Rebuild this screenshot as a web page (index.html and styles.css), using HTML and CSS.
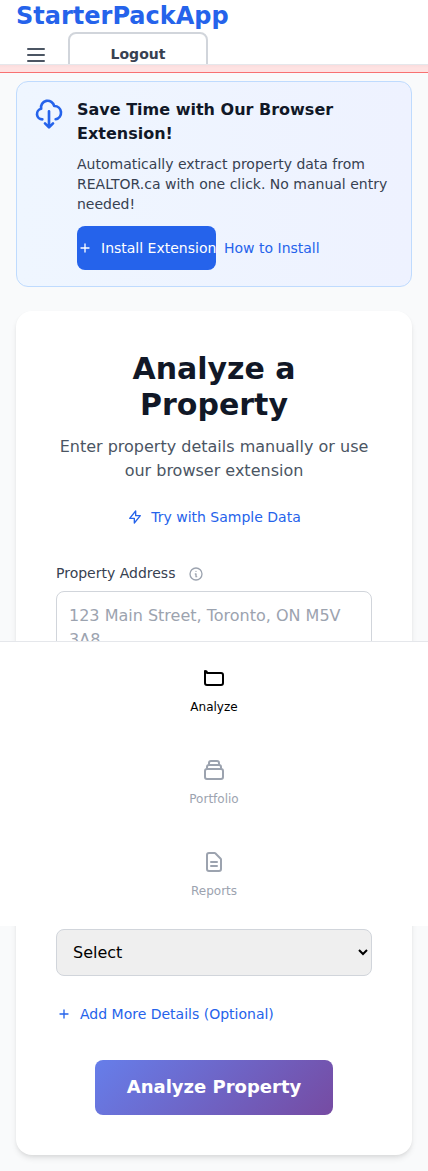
FILE: index.html
```html
<!DOCTYPE html>
<html lang="en">
<head>
<meta charset="utf-8">
<title>StarterPackApp</title>
<link rel="stylesheet" href="styles.css">
</head>
<body>
<header class="header">
  <div class="brand">StarterPackApp</div>
  <div class="header-row">
    <button class="menu-btn" aria-label="Menu"><svg class="icon icon-24" viewBox="0 0 24 24"><path d="M4 6h16M4 12h16M4 18h16"/></svg></button>
    <button class="logout">Logout</button>
  </div>
</header>
<div class="alert-strip"></div>
<main class="main">
  <section class="promo">
    <svg class="icon icon-32" viewBox="0 0 24 24"><path d="M7 16a4 4 0 01-.88-7.903A5 5 0 1115.9 6L16 6a5 5 0 011 9.9M9 19l3 3m0 0l3-3m-3 3V10"/></svg>
    <div class="promo-body">
      <h2 class="promo-title">Save Time with Our Browser Extension!</h2>
      <p class="promo-text">Automatically extract property data from REALTOR.ca with one click. No manual entry needed!</p>
      <div class="promo-actions">
        <button class="install"><svg class="icon icon-16" viewBox="0 0 24 24"><path d="M12 6v6m0 0v6m0-6h6m-6 0H6"/></svg><span>Install Extension</span></button>
        <a class="link">How to Install</a>
      </div>
    </div>
  </section>
  <section class="card">
    <h1 class="card-title">Analyze a Property</h1>
    <p class="card-sub">Enter property details manually or use our browser extension</p>
    <a class="link sample"><svg class="icon icon-16" viewBox="0 0 24 24"><path d="M13 10V3L4 14h7v7l9-11h-7z"/></svg><span>Try with Sample Data</span></a>
    <form class="form">
      <label class="label"><span>Property Address</span><svg class="icon icon-16 info" viewBox="0 0 24 24"><path d="M13 16h-1v-4h-1m1-4h.01M21 12a9 9 0 11-18 0 9 9 0 0118 0z"/></svg></label>
      <textarea class="address" placeholder="123 Main Street, Toronto, ON M5V 3A8"></textarea>
      <select class="select"><option>Select</option></select>
      <a class="link more"><svg class="icon icon-16" viewBox="0 0 24 24"><path d="M12 6v6m0 0v6m0-6h6m-6 0H6"/></svg><span>Add More Details (Optional)</span></a>
      <button type="button" class="submit">Analyze Property</button>
    </form>
  </section>
</main>
<nav class="tabs">
  <a class="tab tab-active"><svg class="icon icon-24" viewBox="0 0 24 24"><path d="M3 7v10a2 2 0 002 2h14a2 2 0 002-2V9a2 2 0 00-2-2H5a2 2 0 00-2-2z"/></svg><span>Analyze</span></a>
  <a class="tab"><svg class="icon icon-24" viewBox="0 0 24 24"><path d="M19 11H5m14 0a2 2 0 012 2v6a2 2 0 01-2 2H5a2 2 0 01-2-2v-6a2 2 0 012-2m14 0V9a2 2 0 00-2-2M5 11V9a2 2 0 012-2m0 0V5a2 2 0 012-2h6a2 2 0 012 2v2M7 7h10"/></svg><span>Portfolio</span></a>
  <a class="tab"><svg class="icon icon-24" viewBox="0 0 24 24"><path d="M9 12h6m-6 4h6m2 5H7a2 2 0 01-2-2V5a2 2 0 012-2h5.586a1 1 0 01.707.293l5.414 5.414a1 1 0 01.293.707V19a2 2 0 01-2 2z"/></svg><span>Reports</span></a>
</nav>
</body>
</html>
```

FILE: styles.css
```css
* { box-sizing: border-box; margin: 0; }
body {
  position: relative;
  height: 1171px;
  overflow: hidden;
  background: #f9fafb;
  color: #111827;
  font-family: "DejaVu Sans", sans-serif;
}
button, textarea, select { font-family: inherit; }
.icon { display: block; flex: none; fill: none; stroke: currentColor; stroke-width: 2; stroke-linecap: round; stroke-linejoin: round; }
.icon-16 { width: 16px; height: 16px; }
.icon-24 { width: 24px; height: 24px; }
.icon-32 { width: 32px; height: 32px; }

.header { height: 65px; overflow: hidden; padding: 0 16px; background: #fff; border-bottom: 1px solid #e5e7eb; }
.brand { height: 32px; font-size: 24px; line-height: 32px; font-weight: 700; color: #2563eb; }
.header-row { display: flex; align-items: flex-start; gap: 12px; }
.menu-btn { padding: 11px 8px; border: 0; background: none; color: #4b5563; }
.logout { width: 140px; height: 44px; border: 2px solid #d1d5db; border-radius: 8px; background: #fff; color: #374151; font-size: 14px; font-weight: 700; }

.alert-strip { height: 8px; background: linear-gradient(#f9dcdd, #fee2e2 3px); border-bottom: 1px solid #f87171; }

.main { padding: 8px 16px 0; }
.promo { display: flex; gap: 12px; padding: 16px; border: 1px solid #bfdbfe; border-radius: 12px; background: linear-gradient(to right, #eff6ff, #eef2ff); color: #2563eb; }
.promo-body { flex: 1; min-width: 0; }
.promo-title { font-size: 16px; line-height: 24px; font-weight: 700; color: #111827; }
.promo-text { margin-top: 8px; font-size: 14px; line-height: 20px; color: #374151; }
.promo-actions { display: flex; align-items: center; gap: 8px; margin-top: 12px; }
.install { display: flex; align-items: center; gap: 8px; width: 139px; height: 44px; padding: 0; border: 0; border-radius: 8px; background: #2563eb; color: #fff; font-size: 14px; white-space: nowrap; }
.link { font-size: 14px; line-height: 20px; color: #2563eb; }

.card { height: 844px; margin-top: 24px; padding: 40px; border-radius: 16px; background: #fff; box-shadow: 0 4px 6px -1px rgba(0,0,0,.1), 0 2px 4px -1px rgba(0,0,0,.06); }
.card-title { font-size: 30px; line-height: 36px; font-weight: 700; text-align: center; }
.card-sub { margin-top: 12px; font-size: 16px; line-height: 24px; color: #4b5563; text-align: center; }
.sample { display: flex; justify-content: center; align-items: center; gap: 8px; margin-top: 24px; }
.form { display: flex; flex-direction: column; margin-top: 36px; }
.label { display: flex; align-items: center; gap: 12px; height: 20px; font-size: 14px; line-height: 20px; color: #374151; }
.info { margin: 2px 0 0 1px; color: #9ca3af; }
.address { height: 74px; margin-top: 8px; padding: 12px; border: 1px solid #d1d5db; border-radius: 8px; font-size: 16px; line-height: 24px; resize: none; overflow: hidden; }
.address::placeholder { color: #9ca3af; }
.select { height: 47px; margin-top: 264px; padding: 12px; border: 1px solid #d1d5db; border-radius: 8px; background: #efefef; color: #000; font-size: 16px; }
.more { display: flex; align-items: center; gap: 8px; margin-top: 28px; }
.submit { align-self: center; width: 238px; height: 55px; margin-top: 36px; padding: 0 0 2px; border: 0; border-radius: 8px; background: linear-gradient(135deg, #667eea 0%, #764ba2 100%); color: #fff; font-size: 18px; font-weight: 700; }

/* Tab bar floats over the form */
.tabs { position: absolute; top: 641px; left: 0; right: 0; height: 285px; padding-top: 10px; border-top: 1px solid #e5e7eb; background: #fff; }
.tab { display: flex; flex-direction: column; align-items: center; gap: 9px; height: 92px; padding-top: 14px; color: #9ca3af; font-size: 12px; line-height: 16px; }
.tab-active { color: #000; }
```
